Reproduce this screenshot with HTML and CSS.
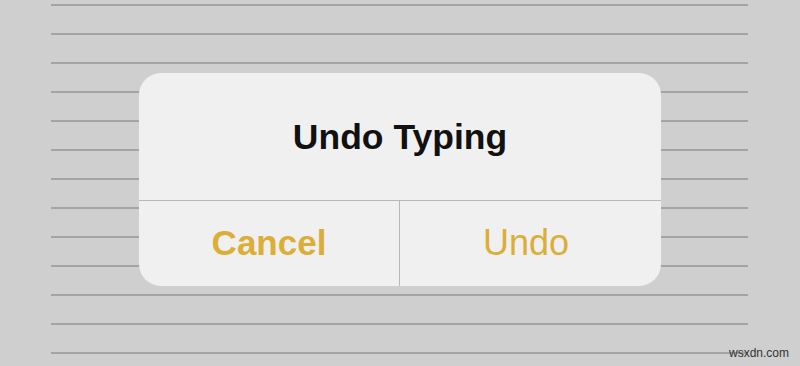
FILE: index.html
```html
<!DOCTYPE html>
<html>
<head>
<meta charset="utf-8">
<link rel="stylesheet" href="styles.css">
</head>
<body>
<div class="page">
  <div class="lines">
    <div class="line"></div><div class="line"></div><div class="line"></div>
    <div class="line"></div><div class="line"></div><div class="line"></div>
    <div class="line"></div><div class="line"></div><div class="line"></div>
    <div class="line"></div><div class="line"></div><div class="line"></div>
    <div class="line"></div>
  </div>
  <div class="alert">
    <div class="alert-title">Undo Typing</div>
    <div class="alert-actions">
      <div class="action action-cancel">Cancel</div>
      <div class="action action-undo">Undo</div>
    </div>
  </div>
  <div class="watermark">wsxdn.com</div>
</div>
</body>
</html>
```
FILE: styles.css
```css
html, body {
  margin: 0;
  padding: 0;
  background: #cfcfcf;
}
.page {
  position: relative;
  width: 800px;
  height: 366px;
  overflow: hidden;
  font-family: "Liberation Sans", Arial, sans-serif;
}
.lines {
  display: flex;
  flex-direction: column;
  gap: 27px;
  padding-top: 4px;
  margin-left: 51px;
  width: 697px;
}
.line {
  height: 2px;
  background: #a4a4a4;
}
.alert {
  position: absolute;
  left: 139px;
  top: 73px;
  width: 522px;
  height: 213px;
  border-radius: 22px;
  background: #f0f0f0;
  display: flex;
  flex-direction: column;
  overflow: hidden;
}
.alert-title {
  height: 128px;
  box-sizing: border-box;
  padding-top: 1px;
  display: flex;
  align-items: center;
  justify-content: center;
  font-size: 35.5px;
  font-weight: bold;
  color: #111;
  border-bottom: 1px solid #b8b8b8;
}
.alert-actions {
  flex: 1;
  display: grid;
  grid-template-columns: 261px 1fr;
}
.action {
  display: flex;
  align-items: center;
  justify-content: center;
  font-size: 35px;
  color: #dbae37;
  padding-bottom: 2px;
}
.action-cancel {
  font-weight: bold;
  border-right: 1px solid #b8b8b8;
}
.action-undo {
  font-size: 36px;
  padding-right: 9px;
}
.watermark {
  position: absolute;
  right: 11px;
  bottom: 6px;
  font-size: 12px;
  color: #333;
}
```
